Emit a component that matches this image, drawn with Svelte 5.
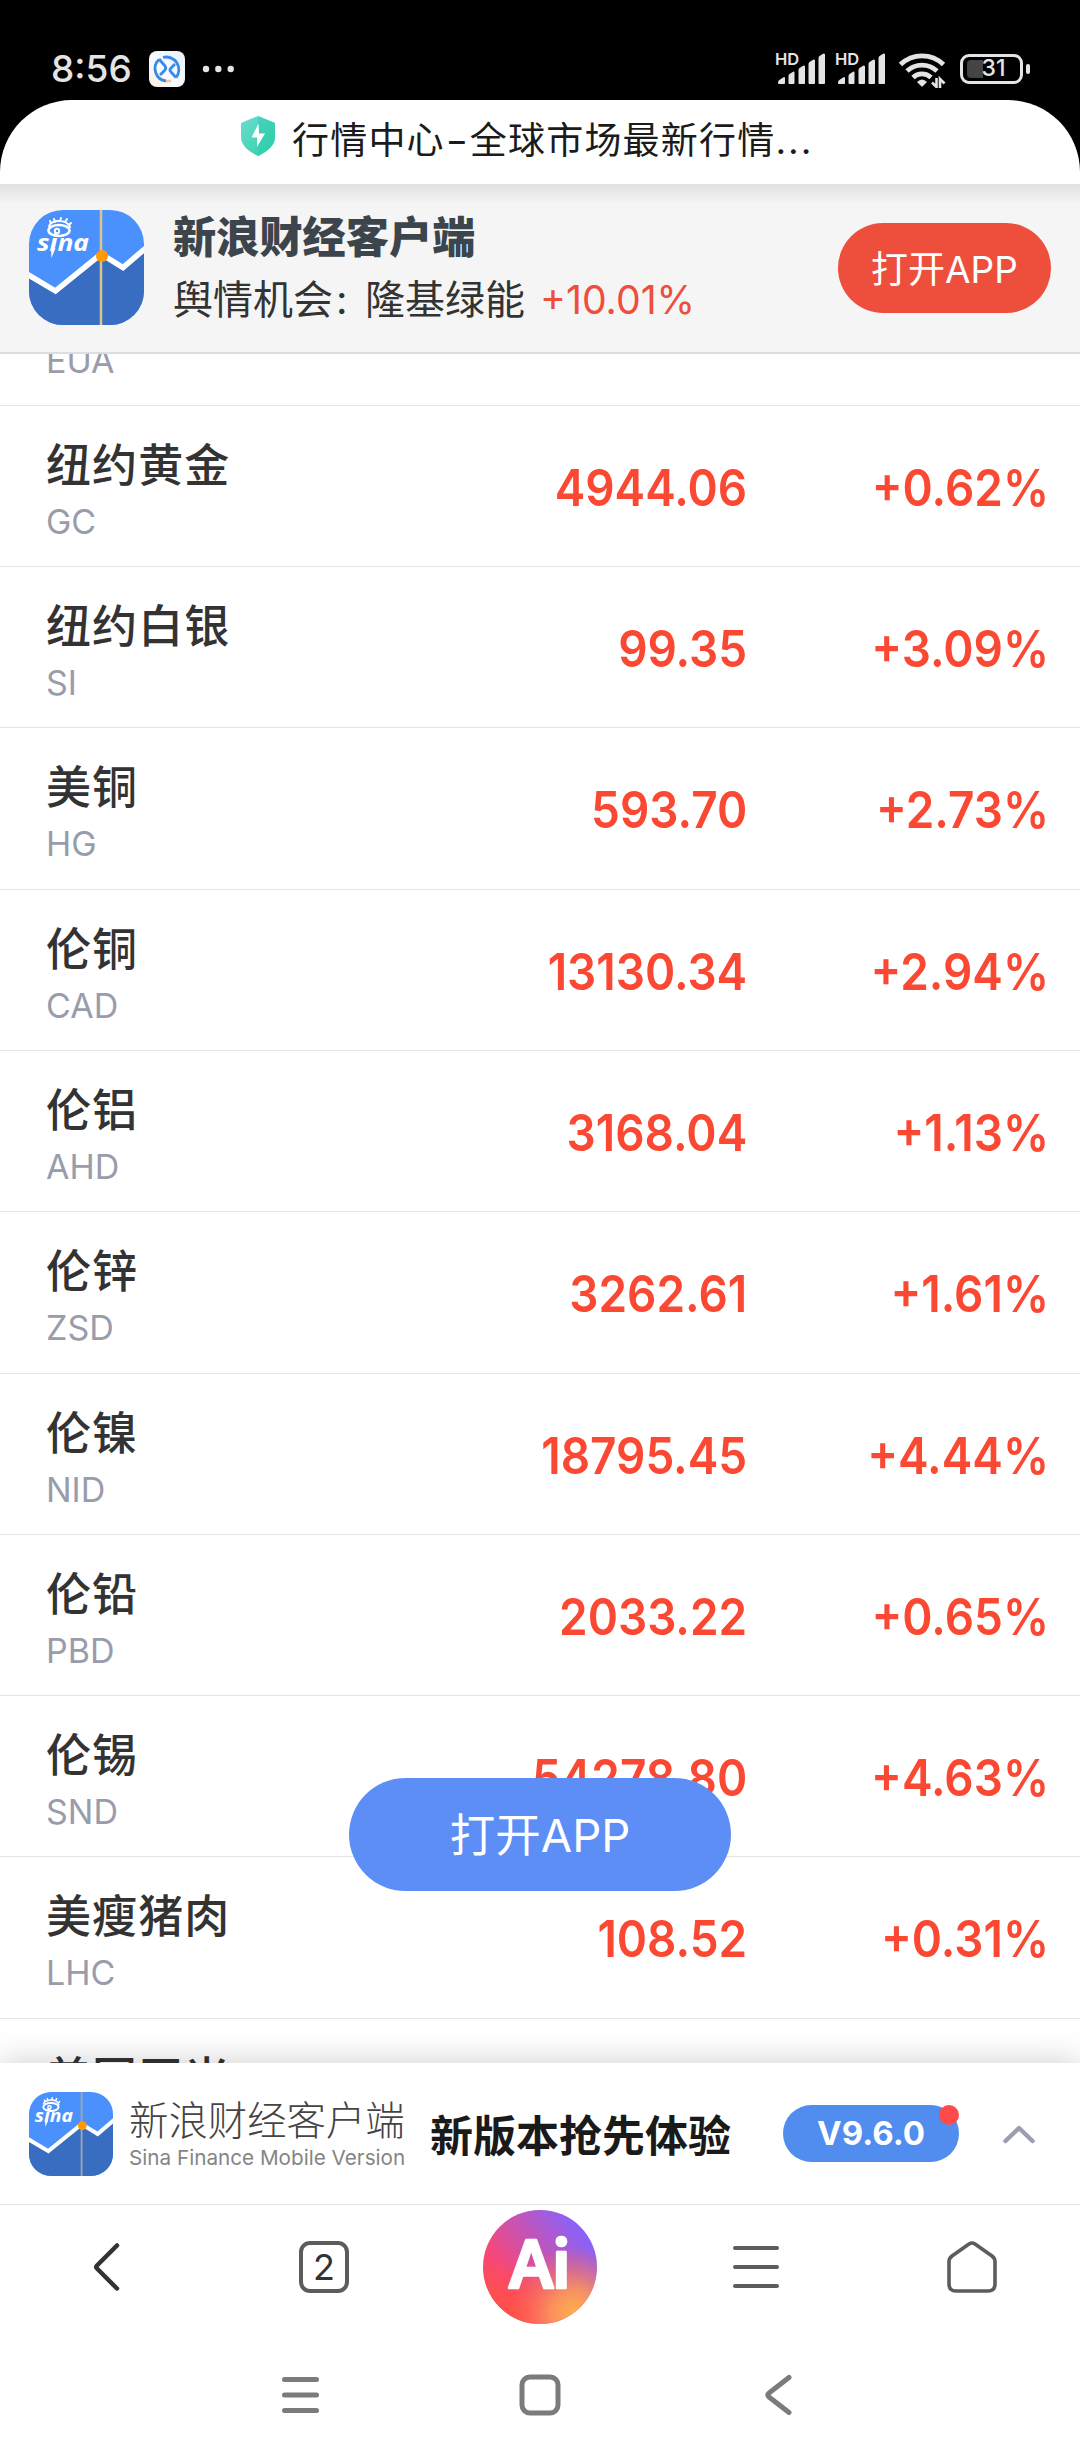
<script lang="ts">
    const quotes = [
        { name: "", code: "EUA", price: "", change: "" },
        { name: "纽约黄金", code: "GC", price: "4944.06", change: "+0.62%" },
        { name: "纽约白银", code: "SI", price: "99.35", change: "+3.09%" },
        { name: "美铜", code: "HG", price: "593.70", change: "+2.73%" },
        { name: "伦铜", code: "CAD", price: "13130.34", change: "+2.94%" },
        { name: "伦铝", code: "AHD", price: "3168.04", change: "+1.13%" },
        { name: "伦锌", code: "ZSD", price: "3262.61", change: "+1.61%" },
        { name: "伦镍", code: "NID", price: "18795.45", change: "+4.44%" },
        { name: "伦铅", code: "PBD", price: "2033.22", change: "+0.65%" },
        { name: "伦锡", code: "SND", price: "54278.80", change: "+4.63%" },
        { name: "美瘦猪肉", code: "LHC", price: "108.52", change: "+0.31%" },
        { name: "美国玉米", code: "", price: "", change: "" },
    ];
</script>

{#snippet appIcon(line: string)}
    <svg class="app-icon" viewBox="0 0 115 115">
        <path fill="#4b91fd" d="M0 0h115v115H0z" />
        <path fill="#396dc2" d="M0 66 26.500 82 72 46 94 60 115 40V115H0z" />
        <path fill="none" stroke="#fff" stroke-width="5.500" d="M-2 64 26.500 81 72 44 94 57.500 118 37" />
        <path stroke={line} stroke-width="2.500" d="M72 0V115" />
        <circle cx="73" cy="46" r="6" fill="#ff9a05" />
        <g fill="none" stroke="#fff" stroke-width="2" stroke-linecap="round">
            <ellipse cx="30" cy="20.500" rx="10.500" ry="5.500" stroke-width="2.600" />
            <path d="M20 16c2-4 6-5 10-5s9 1 11 6M22 13l-1-2M26 12l-1-3M31 11l1-3M36 12l2-3M40 15l2-2" />
            <circle cx="28" cy="21" r="2.200" />
        </g>
        <text class="sina" x="8" y="41" textLength="52" lengthAdjust="spacingAndGlyphs">sina</text>
        <path fill="#fff" d="M22 38h4.500l-4 10z" />
    </svg>
{/snippet}

{#snippet signal()}
    <svg class="signal" width="50" height="34" viewBox="0 0 50 34">
        <text x="-1" y="12.500" class="hd">HD</text>
        <path
            fill="#e4e4e4"
            d="M2 30.500q0-2 2-3l4-2.500q1 0 1 1V31q0 1-1 1H3q-1 0-1-1zM12.500 24q0-1 1-2l4-2.500q1 0 1 1V31q0 1-1 1h-4q-1 0-1-1zM22.500 18q0-1 1-2l4-2.500q1.500 0 1.500 1V31q0 1-1 1h-4.500q-1 0-1-1zM32.500 12q0-1 1-2l4-2.500q1.500 0 1.500 1V31q0 1-1 1h-4.500q-1 0-1-1zM42.500 6q0-1 1-2l4-2.500q1.500 0 1.500 1V31q0 1-1 1h-4.500q-1 0-1-1z"
        />
    </svg>
{/snippet}

<div class="screen">
    <header class="status">
        <span class="time">8:56</span>
        <svg class="notice" width="36" height="36" viewBox="0 0 36 36">
            <defs>
                <linearGradient id="notice-bg" x1="1" y1="0" x2="0" y2="1">
                    <stop offset="0" stop-color="#e8f1ff" />
                    <stop offset=".6" stop-color="#f8fbff" />
                    <stop offset="1" stop-color="#ffeedd" />
                </linearGradient>
            </defs>
            <rect width="36" height="36" rx="8" fill="url(#notice-bg)" />
            <g fill="none" stroke="#368be9" stroke-width="2.800">
                <path d="M10 8.500a12.500 12.500 0 0 0 7 21.500M14 6.500a12.500 12.500 0 0 1 13 20M10 8l6 7q1.500 2 0 4l-5 5" />
                <path d="M26 13l-4 4q-2 2 0 4l5 5.500" />
            </g>
            <path d="M17 30h5" stroke="#f2c4a4" stroke-width="2.500" />
        </svg>
        <svg class="dots" width="32" height="8" viewBox="0 0 32 8" fill="#e4e4e4">
            <circle cx="4" cy="4" r="3.200" /><circle cx="16.300" cy="4" r="3.200" /><circle cx="28.700" cy="4" r="3.200" />
        </svg>
        <div class="status-right">
            {@render signal()}
            {@render signal()}
            <svg class="wifi" width="47" height="36" viewBox="0 0 47 36">
                <g fill="none" stroke="#e4e4e4" stroke-width="4.800">
                    <path d="M1.500 12.500a31 31 0 0 1 43 0M8 19a22 22 0 0 1 30 0M14 25.500a13 13 0 0 1 18 0" />
                </g>
                <path fill="#e4e4e4" d="M18 30q5-5 10 0l-4 4q-1 1-2 0z" />
                <path fill="none" stroke="#000" stroke-width="6" d="M37.500 25v11M41 25v11" />
                <path fill="none" stroke="#e4e4e4" stroke-width="2.600" d="M37.500 26v9l-4.500-4.500M41 36v-9l4.500 4.500" />
            </svg>
            <div class="battery"><i class="level"></i><span>31</span></div>
        </div>
    </header>

    <div class="title-bar">
        <svg width="34" height="40" viewBox="0 0 34 40">
            <defs>
                <linearGradient id="shield" x1="0" y1="0" x2="1" y2="1">
                    <stop offset="0" stop-color="#6cddd3" />
                    <stop offset="1" stop-color="#2dcf9f" />
                </linearGradient>
            </defs>
            <path fill="url(#shield)" d="M17 0 33 6.500q1 .4 1 1.500v13q0 11-17 19Q0 32 0 21V8q0-1.100 1-1.500z" />
            <path fill="#2bcdb4" opacity=".45" d="M17 0 33 6.500q1 .4 1 1.500v13q0 11-17 19z" />
            <path fill="#fff" d="M17.500 7.500 10.500 21.500H16V31L24 17.500H18z" />
        </svg>
        <h1>行情中心<span class="dash">–</span>全球市场最新行情<span class="ellipsis">...</span></h1>
    </div>

    <section class="promo">
        {@render appIcon("#d8c78a")}
        <div class="promo-text">
            <strong>新浪财经客户端</strong>
            <p>舆情机会<span class="colon">:</span>隆基绿能<em>+10.01%</em></p>
        </div>
        <button class="open-top">打开APP</button>
    </section>

    <main>
        <ul>
            {#each quotes as q}
                <li>
                    <div class="names">
                        <span class="name">{q.name}</span>
                        <span class="code">{q.code}</span>
                    </div>
                    <span class="price">{q.price}</span>
                    <span class="change">{q.change}</span>
                </li>
            {/each}
        </ul>
        <button class="open-float">打开APP</button>
    </main>

    <section class="version">
        {@render appIcon("#9fa8a6")}
        <div class="brand">
            <span class="brand-cn">新浪财经客户端</span>
            <span class="brand-en">Sina Finance Mobile Version</span>
        </div>
        <b class="slogan">新版本抢先体验</b>
        <span class="pill">V9.6.0<i></i></span>
        <svg class="chevron" width="36" height="22" viewBox="0 0 36 22">
            <path fill="none" stroke="#9b9eae" stroke-width="4.500" stroke-linecap="round" stroke-linejoin="round" d="M4.500 18 18 5 31.500 18" />
        </svg>
    </section>

    <nav class="browser-nav">
        <div>
            <svg class="back" width="30" height="52" viewBox="0 0 30 52">
                <path fill="none" stroke="#333" stroke-width="4.500" stroke-linecap="round" stroke-linejoin="round" d="M26 4.500 6 24.500q-1.500 1.500 0 3l20 20" />
            </svg>
        </div>
        <div><span class="tabs">2</span></div>
        <div>
            <svg width="114" height="114" viewBox="0 0 114 114">
                <defs>
                    <linearGradient id="ai-base" x1="0" y1=".7" x2=".85" y2=".1">
                        <stop offset="0" stop-color="#ff4a55" />
                        <stop offset=".25" stop-color="#f5487e" />
                        <stop offset="1" stop-color="#8463ff" />
                    </linearGradient>
                    <radialGradient id="ai-glow" cx=".8" cy=".9" r=".58">
                        <stop offset="0" stop-color="#ffb04a" />
                        <stop offset=".35" stop-color="#ff9b55" stop-opacity=".85" />
                        <stop offset="1" stop-color="#ff6a50" stop-opacity="0" />
                    </radialGradient>
                    <radialGradient id="ai-red" cx=".25" cy=".9" r=".5">
                        <stop offset="0" stop-color="#ff5048" />
                        <stop offset="1" stop-color="#ff5048" stop-opacity="0" />
                    </radialGradient>
                </defs>
                <circle cx="57" cy="57" r="57" fill="url(#ai-base)" />
                <circle cx="57" cy="57" r="57" fill="url(#ai-red)" />
                <circle cx="57" cy="57" r="57" fill="url(#ai-glow)" />
                <text class="ai" x="26 69" y="78">Ai</text>
            </svg>
        </div>
        <div>
            <svg width="46" height="42" viewBox="0 0 46 42">
                <path stroke="#5c5c5c" stroke-width="4" stroke-linecap="round" d="M2 2h42M2 21h42M2 40h42" />
            </svg>
        </div>
        <div>
            <svg class="home" width="50" height="52" viewBox="0 0 50 52">
                <path fill="none" stroke="#5c5c5c" stroke-width="3.600" stroke-linejoin="round" d="M22 3q3-2 6 0L45 15q3 2.500 3 5.500V43q0 7-7 7H9q-7 0-7-7V20.500q0-3 3-5.500z" />
            </svg>
        </div>
    </nav>

    <footer class="system-nav">
        <svg width="42" height="42" viewBox="0 0 42 42">
            <path stroke="#7b7b7b" stroke-width="5" stroke-linecap="round" d="M4.500 5.500h32M4.500 21h32M4.500 36.500h32" />
        </svg>
        <svg width="42" height="42" viewBox="0 0 42 42">
            <rect x="3" y="3" width="36" height="36" rx="8" fill="none" stroke="#7b7b7b" stroke-width="5" />
        </svg>
        <svg width="42" height="42" viewBox="0 0 42 42">
            <path fill="none" stroke="#7b7b7b" stroke-width="5" stroke-linecap="round" d="M31 3.500 11 19q-2.500 2 0 4l20 15.500" />
        </svg>
    </footer>
</div>

<style>
    :global(body) {
        background: #000;
    }

    .screen {
        display: flex;
        flex-direction: column;
        width: 1080px;
        height: 2460px;
        overflow: hidden;
        background: #000;
        color: #333;
        font-family: Inter, "Noto Sans CJK SC", sans-serif;
    }

    .screen * {
        box-sizing: border-box;
    }

    svg {
        display: block;
        flex: none;
    }

    button {
        border: 0;
        padding: 0;
        color: #fff;
        font-family: inherit;
    }

    .status {
        display: flex;
        align-items: center;
        flex: none;
        height: 100px;
        padding: 37px 50px 0 51px;
        color: #e4e4e4;
    }

    .time {
        width: 98px;
        font-size: 37px;
        font-weight: 500;
        line-height: 1;
        white-space: nowrap;
    }

    .dots {
        margin-left: 17px;
    }

    .status-right {
        display: flex;
        align-items: center;
        margin-left: auto;
    }

    .signal {
        margin-right: 10px;
        overflow: visible;
    }

    .hd {
        font-size: 16.5px;
        font-weight: 600;
        fill: #e4e4e4;
    }

    .wifi {
        margin: 2px 14px 0 3px;
    }

    .battery {
        position: relative;
        display: flex;
        align-items: center;
        justify-content: center;
        width: 63px;
        height: 30px;
        margin-right: 7px;
        border: 3px solid #e4e4e4;
        border-radius: 9px;
        font-size: 23px;
        font-weight: 500;
        line-height: 1;
    }

    .battery::after {
        content: "";
        position: absolute;
        right: -10px;
        width: 4px;
        height: 10px;
        border-radius: 2px;
        background: #e4e4e4;
    }

    .battery span {
        position: relative;
        margin-left: 4px;
    }

    .level {
        position: absolute;
        left: 4px;
        width: 16px;
        height: 18px;
        border-radius: 4px 0 0 4px;
        background: #444;
    }

    .title-bar {
        display: flex;
        flex: none;
        height: 84px;
        padding: 16px 0 0 241px;
        gap: 17px;
        border-radius: 72px 72px 0 0;
        background: #fff;
    }

    h1 {
        margin: 0;
        color: #1b1b1b;
        font-size: 37px;
        font-weight: 400;
        line-height: 50px;
        letter-spacing: 1.2px;
        white-space: nowrap;
    }

    .dash {
        display: inline-block;
        width: 25px;
        text-align: center;
        transform: scaleX(0.85);
    }

    .ellipsis {
        letter-spacing: 2px;
    }

    .promo {
        display: flex;
        align-items: center;
        flex: none;
        height: 170px;
        padding: 0 29px 2px;
        border-bottom: 2px solid #dedede;
        background: linear-gradient(#e0e0e0, #f5f5f5 20px);
    }

    .app-icon {
        width: 115px;
        height: 115px;
        border-radius: 34px;
    }

    .sina {
        font-family: "Noto Sans", sans-serif;
        font-size: 24px;
        font-style: italic;
        font-weight: 700;
        fill: #fff;
    }

    .promo-text {
        flex: 1;
        margin-left: 29px;
        white-space: nowrap;
    }

    strong {
        display: block;
        color: #3c454c;
        font-size: 43.2px;
        font-weight: 900;
        line-height: 62px;
    }

    p {
        margin: 4px 0 0;
        font-size: 40px;
        line-height: 56px;
    }

    .colon {
        display: inline-block;
        width: 32px;
        padding-left: 3px;
    }

    em {
        display: inline-block;
        margin-left: 15px;
        color: #ed4f3c;
        font-style: normal;
        transform: scaleX(0.98);
        transform-origin: left;
    }

    .open-top {
        width: 213px;
        height: 90px;
        margin-top: 2px;
        padding-bottom: 2px;
        border-radius: 45px;
        background: #ed4f3c;
        font-size: 37px;
    }

    main {
        position: relative;
        flex: 1;
        min-height: 0;
        overflow: hidden;
        background: #fff;
    }

    ul {
        margin: -109.5px 0 0;
        padding: 0;
        list-style: none;
    }

    li {
        display: grid;
        grid-template-columns: 300px 1fr 300px;
        align-items: center;
        height: 161.3px;
        padding: 0 31px 0 46px;
        border-bottom: 1px solid #e5e5e5;
    }

    .names {
        display: flex;
        flex-direction: column;
        height: 161px;
        padding-top: 30px;
    }

    .name {
        height: 60px;
        font-size: 45px;
        font-weight: 500;
        line-height: 60px;
        letter-spacing: 1.1px;
    }

    .code {
        color: #989cab;
        font-size: 34px;
        line-height: 52px;
    }

    /* Inter digits run wide, so the figures are condensed towards their right edge */
    .price,
    .change {
        padding-top: 3px;
        color: #fa4833;
        font-size: 51px;
        font-weight: 600;
        line-height: 70px;
        text-align: right;
        transform: scaleX(0.9);
        transform-origin: right;
    }

    .price {
        padding-right: 2px;
    }

    .open-float {
        position: absolute;
        left: 349px;
        bottom: 172px;
        width: 382px;
        height: 113px;
        padding-bottom: 5px;
        border-radius: 57px;
        background: #5d8ef5;
        font-size: 45.5px;
    }

    .version {
        position: relative;
        display: flex;
        align-items: center;
        flex: none;
        height: 141px;
        padding: 0 0 0 29px;
        background: #fff;
        box-shadow: 0 0 32px rgba(0, 0, 0, 0.2);
    }

    .version .app-icon {
        width: 84px;
        height: 84px;
        border-radius: 22px;
    }

    .brand {
        display: flex;
        flex-direction: column;
        width: 301px;
        margin-left: 16px;
        padding-top: 1px;
        white-space: nowrap;
    }

    .brand-cn {
        color: #444;
        font-size: 39.4px;
        font-weight: 300;
        line-height: 47px;
    }

    .brand-en {
        color: #858585;
        font-size: 20.7px;
        line-height: 26px;
    }

    .slogan {
        width: 353px;
        padding-bottom: 2px;
        color: #1a1a1a;
        font-size: 43px;
        white-space: nowrap;
    }

    .pill {
        position: relative;
        width: 176px;
        height: 57px;
        border-radius: 29px;
        background: #508dee;
        color: #fff;
        font-size: 33px;
        font-weight: 700;
        line-height: 57px;
        text-align: center;
    }

    .pill i {
        position: absolute;
        top: 0;
        right: 0;
        width: 20px;
        height: 20px;
        border-radius: 50%;
        background: #ff4a4a;
    }

    .chevron {
        margin-left: 42px;
    }

    .browser-nav {
        position: relative;
        display: grid;
        grid-template-columns: repeat(5, 1fr);
        flex: none;
        height: 126px;
        padding-bottom: 2px;
        border-top: 1px solid #e2e2e2;
        background: #fff;
    }

    .browser-nav div {
        display: flex;
        align-items: center;
        justify-content: center;
    }

    .browser-nav .back {
        margin-right: 5px;
    }

    .tabs {
        width: 50px;
        height: 52px;
        border: 4px solid #5c5c5c;
        border-radius: 11px;
        font-size: 36px;
        line-height: 44px;
        text-align: center;
    }

    .ai {
        font-family: "Noto Sans", sans-serif;
        font-size: 66px;
        font-weight: 600;
        fill: #fff;
        stroke: #fff;
        stroke-width: 2.5px;
        stroke-linejoin: round;
    }

    .system-nav {
        position: relative;
        display: flex;
        align-items: center;
        justify-content: center;
        gap: 197px;
        flex: none;
        height: 130px;
        background: #fff;
    }
</style>
